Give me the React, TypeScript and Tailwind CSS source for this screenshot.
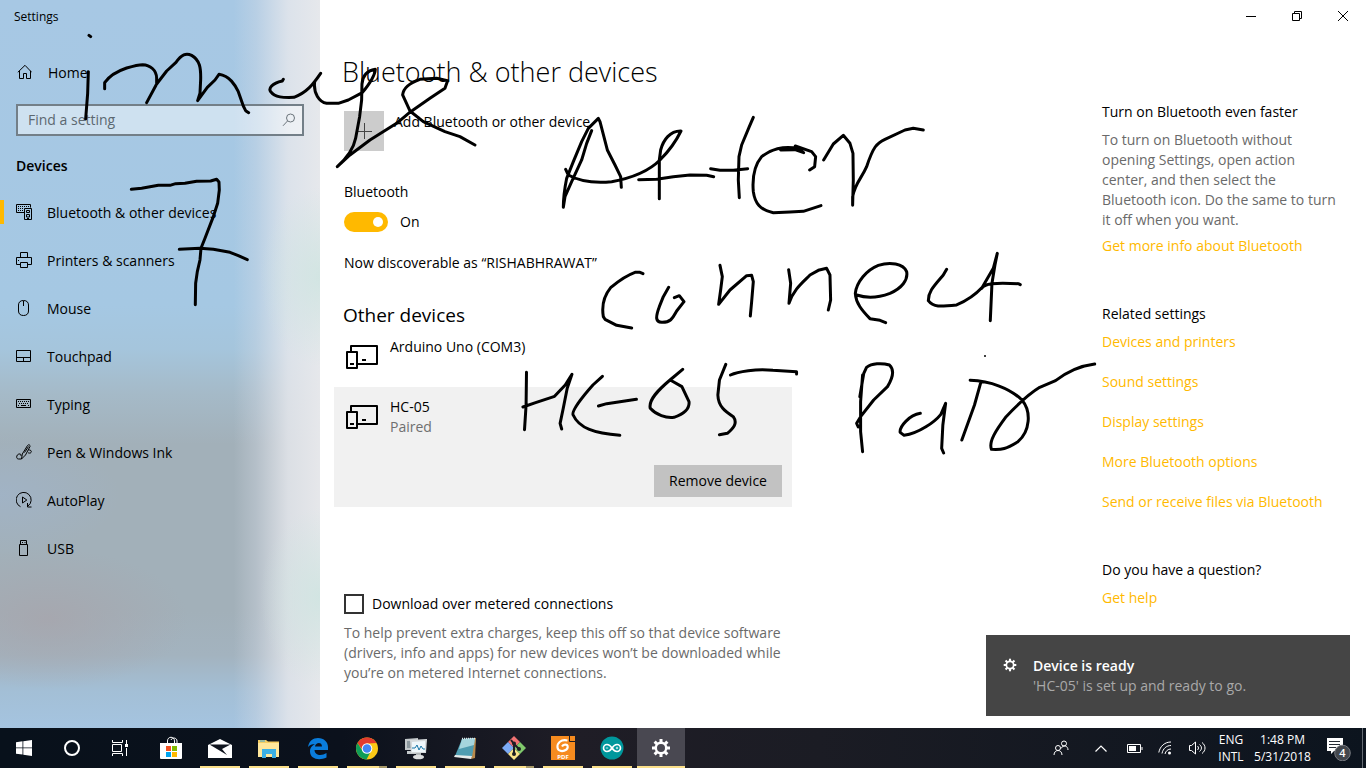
import React from 'react';

type IconProps = { children: React.ReactNode; className?: string };

function Glyph({ children, className = 'size-4' }: IconProps) {
  return (
    <svg viewBox="0 0 16 16" className={`${className} shrink-0`} fill="none" stroke="currentColor" strokeWidth="1" aria-hidden="true">
      {children}
    </svg>
  );
}

const navItems: { label: string; icon: React.ReactNode; active?: boolean }[] = [
  {
    label: 'Bluetooth & other devices',
    active: true,
    icon: (
      <>
        <path d="M8 8.500H.5v-8h14v3" />
        <path d="M2 2.500h11M2 4.500h6M2 6.500h6" strokeDasharray="1 1" />
        <path d="M8.500 4.500h7v11h-7z" />
        <path d="M10.500 6.500h3v2h-3zM10.500 10.500h3v2.500h-3zM11 14.500h2" />
      </>
    ),
  },
  {
    label: 'Printers & scanners',
    icon: (
      <>
        <path d="M4.500 5.500v-5h7v5M4.500 12.500h-4v-7h15v7h-4" />
        <path d="M4.500 10.500h7v5h-7zM2.500 8v1" />
      </>
    ),
  },
  { label: 'Mouse', icon: <path d="M7.500.5C4 .5 2.500 2.500 2.500 5v6c0 3 2 4.500 5 4.500s5-1.500 5-4.500V5c0-2.500-1.500-4.500-5-4.500zM7.500 1v5" /> },
  { label: 'Touchpad', icon: <path d="M.5 2.500h14v11H.5zM.5 9.500h14M7.500 9.500v4" /> },
  {
    label: 'Typing',
    icon: (
      <>
        <path d="M.5 3.500h14v8H.5z" />
        <path d="M2 5.500h11M3 7.500h10" strokeDasharray="1 1" />
        <path d="M2 9.500h1M5 9.500h5M12 9.500h1" />
      </>
    ),
  },
  {
    label: 'Pen & Windows Ink',
    icon: (
      <>
        <path d="M5.500 15l.8-5L11.500 1.500c1-1.500 3-.5 2.500 1L9.500 11 5.500 15M8.500 8.500l4-6" />
        <path d="M5.500 15H2.500c-2.500 0-2.500-4 .3-5 2-.5 2.700 1 2 2M12.500 6c2-.5 3.500 1.200 2.500 2.500-.7 1-2 .5-3 .3" />
      </>
    ),
  },
  {
    label: 'AutoPlay',
    icon: (
      <>
        <path d="M4.500 14.700A7.500 7.500 0 1 1 12 14" />
        <path d="M6.500 5v6l4.300-3zM11.500 11v4h4" />
      </>
    ),
  },
  { label: 'USB', icon: <path d="M3.500 4.500h8v11h-8zM4.500 4.500v-4h6v4M6 2.500h1M8.500 2.500h1" /> },
];

function DeviceIcon() {
  return (
    <svg viewBox="0 0 32 24" className="mt-2 h-6 w-8 shrink-0" fill="none" stroke="black" strokeWidth="2" strokeLinejoin="round" aria-hidden="true">
      <path d="M5 6V1h26v18H12M1 7h10v16H1zM4 19h4M16 15h4" />
    </svg>
  );
}

const relatedLinks = [
  'Devices and printers',
  'Sound settings',
  'Display settings',
  'More Bluetooth options',
  'Send or receive files via Bluetooth',
];

function Link({ children }: { children: string }) {
  return (
    <a href="#" className="text-[#ffb900] hover:text-[#c78f00]">
      {children}
    </a>
  );
}

function Sidebar() {
  return (
    <aside className="w-80 shrink-0 bg-[radial-gradient(ellipse_60px_90px_at_100%_38%,rgba(205,228,224,0.8),transparent),radial-gradient(ellipse_60px_90px_at_100%_82%,rgba(205,228,224,0.8),transparent),linear-gradient(to_right,transparent_73%,rgba(215,220,230,0.35)_80%,rgba(229,231,236,0.85)_90%,rgba(232,233,236,0.97)_100%),radial-gradient(ellipse_140px_70px_at_15%_85%,rgba(167,165,172,0.8),transparent),radial-gradient(ellipse_120px_60px_at_0%_68%,rgba(160,180,202,0.7),transparent),linear-gradient(to_bottom,#a7c8e4_0%,#a5c8e3_42%,#a5c5dc_48%,#a5bac8_54%,#a2b0b9_61%,#a2b0b9_84%,#a3b3bf_90%,#a3bfd6_95%,#a5c4e0_100%)]">
      <div className="flex h-8 items-center px-3.5 pt-0.5 text-[12px]">Settings</div>
      <a href="#" className="mt-4 flex h-12 items-center gap-4 px-4">
        <Glyph>
          <path d="M1.800 8.300L9 1.300l6.700 7M3.500 6.800v7.700h4V9.500h3v5h4V6.800" />
        </Glyph>
        <span className="pt-0.5">Home</span>
      </a>
      <div className="mx-4 mt-2 flex h-8 items-center border-2 border-[#737f88] bg-white/45 pr-1.5 pl-2.5">
        <input aria-label="Find a setting" placeholder="Find a setting" className="min-w-0 flex-1 bg-transparent outline-none placeholder:text-[#5c6870]" />
        <svg viewBox="0 0 14 14" className="size-3.5 text-[#6b747b]" fill="none" stroke="currentColor" aria-hidden="true">
          <circle cx="8.500" cy="5" r="4" />
          <path d="M5.500 8L1 12.800" />
        </svg>
      </div>
      <h2 className="mt-2 flex h-11 items-center px-4 font-semibold">Devices</h2>
      <nav>
        {navItems.map((item) => (
          <a key={item.label} href="#" className="flex h-12 items-center">
            <span className={item.active ? 'h-6 w-1 bg-[#ffb900]' : 'h-6 w-1'} />
            <span className="ml-3 flex items-center gap-[15px]">
              <Glyph>{item.icon}</Glyph>
              <span className="pt-0.5">{item.label}</span>
            </span>
          </a>
        ))}
      </nav>
    </aside>
  );
}

function DevicesPanel() {
  return (
    <section className="w-[448px] shrink-0">
      <h1 className="mt-5 -ml-0.5 text-[27px] leading-10 font-light">Bluetooth &amp; other devices</h1>
      <button className="mt-[19px] flex items-start gap-2.5 text-left">
        <span className="flex size-10 items-center justify-center bg-[#ccc]">
          <svg viewBox="0 0 16 16" className="size-4" stroke="#444" aria-hidden="true">
            <path d="M8.500 0v16M0 8.500h16" />
          </svg>
        </span>
        <span className="pt-px">Add Bluetooth or other device</span>
      </button>
      <label htmlFor="bt" className="mt-[31px] block">
        Bluetooth
      </label>
      <div className="mt-[9px] flex items-center gap-3">
        <input
          id="bt"
          type="checkbox"
          role="switch"
          defaultChecked
          className="flex h-5 w-11 appearance-none items-center rounded-full bg-[#999] px-[5px] before:size-2.5 before:rounded-full before:bg-white checked:justify-end checked:bg-[#ffb900]"
        />
        <span className="pt-px">On</span>
      </div>
      <p className="mt-[21px]">Now discoverable as “RISHABHRAWAT”</p>
      <h2 className="mt-7 -ml-px text-[19px] leading-7">Other devices</h2>
      <ul className="-ml-2.5">
        <li className="flex h-[58px] gap-3 px-3 pt-2">
          <DeviceIcon />
          <span>Arduino Uno (COM3)</span>
        </li>
        <li className="bg-[#f1f1f1] p-2.5">
          <div className="flex gap-3 pl-0.5">
            <DeviceIcon />
            <div>
              <p>HC-05</p>
              <p className="text-[#6f6f6f]">Paired</p>
            </div>
          </div>
          <button className="mt-7 ml-auto block h-8 w-32 bg-[#c2c2c2]">Remove device</button>
        </li>
      </ul>
      <label className="mt-[87px] flex items-center gap-2">
        <input type="checkbox" className="size-5 appearance-none border-2 border-[#333] bg-white checked:bg-[#ffb900]" />
        Download over metered connections
      </label>
      <p className="mt-[9px] text-[#6a6a6a]">
        To help prevent extra charges, keep this off so that device software (drivers, info and apps) for new devices won’t be downloaded while you’re on metered Internet connections.
      </p>
    </section>
  );
}

function HelpPanel() {
  return (
    <aside className="w-[264px] shrink-0 pt-[70px] pr-6">
      <h3>Turn on Bluetooth even faster</h3>
      <p className="mt-2 mb-1.5 text-[#6a6a6a]">
        To turn on Bluetooth without opening Settings, open action center, and then select the Bluetooth icon. Do the same to turn it off when you want.
      </p>
      <Link>Get more info about Bluetooth</Link>
      <h3 className="mt-12">Related settings</h3>
      <ul className="mt-2 flex flex-col gap-5 whitespace-nowrap">
        {relatedLinks.map((t) => (
          <li key={t}>
            <Link>{t}</Link>
          </li>
        ))}
      </ul>
      <h3 className="mt-12 mb-2">Do you have a question?</h3>
      <Link>Get help</Link>
    </aside>
  );
}

function WindowButtons() {
  const shapes = [
    { name: 'Minimize', d: 'M0 5.500h10' },
    { name: 'Restore', d: 'M.5 2.500h7v7h-7zM2.500 2.500v-2h7v7h-2' },
    { name: 'Close', d: 'M0 0l10 10M10 0L0 10' },
  ];
  return (
    <div className="flex h-8 justify-end">
      {shapes.map((s) => (
        <button key={s.name} aria-label={s.name} className="flex w-[46px] items-center justify-center">
          <svg viewBox="0 0 10 10" className="size-2.5" fill="none" stroke="black">
            <path d={s.d} />
          </svg>
        </button>
      ))}
    </div>
  );
}

const inkGroups = [
  {
    transform: 'scale(.3333)',
    d: 'M267 106l5 4 M265 215L263 280L257 357 M314 266L314 248C330 225 350 214 380 204C400 198 415 194 428 194C450 195 470 210 470 235L470 252 M440 308L470 252L500 213L528 187C545 163 558 158 575 166C600 180 603 205 602 240L600 280L593 302L622 262L645 240L657 223C690 228 705 255 715 275L730 318L737 332L746 338 M850 238L847 243C815 250 805 265 812 275C825 293 850 293 882 292C920 278 938 255 962 220 M944 246C940 280 958 306 980 310L1015 310L1045 300L1087 278C1110 250 1125 225 1126 208C1100 212 1088 230 1086 252L1085 300L1079 350L1067 415C1060 450 1040 475 1012 500L1050 465L1110 420L1190 370L1232 335L1290 295L1335 265L1343 242L1310 235L1260 238C1225 250 1210 265 1208 285L1230 333L1270 365L1335 395L1380 410L1425 435 M394 568L425 565L475 556L510 556L527 551L555 550L590 544L632 543L650 538L657 546L658 570L653 610L640 650L615 715L603 745L600 780L592 815L587 850L586 914 M538 748L600 745L640 748L690 757L715 767L742 779',
  },
  {
    transform: 'translate(520 100) scale(.3333)',
    d: 'M215 92L200 130L185 180L155 245L135 290L130 322C130 290 135 260 140 235L160 185L185 125L205 85L235 55L240 65L262 150L285 195L302 230L304 262 M137 208L145 225C180 245 220 250 275 245C320 237 380 220 420 180C450 150 470 120 483 93C450 92 430 120 422 150L418 180L418 296 M356 239L410 238L460 230L510 225L560 226L581 230 M700 52L688 80L665 135L657 170L655 240L658 293 M572 206L600 211L640 211L683 206 M782 150L825 149L851 158L835 146C790 135 750 150 725 170C700 200 697 240 700 275C705 310 720 330 760 338L810 336L850 334L903 317 M826 138L875 155L887 170L884 200L869 210 M911 180L940 132L970 106L990 130L999 160L1000 240L998 316L998 290C1005 250 1025 235 1040 200C1060 140 1070 130 1095 118L1155 90L1180 85L1210 90',
  },
  {
    transform: 'translate(580 240) scale(.3333)',
    d: 'M189 101L180 97L165 97C130 110 110 128 92 143C70 170 65 200 70 230L75 238L110 256L155 264 M266 142L250 170L238 200C225 235 228 245 245 247C275 248 280 230 290 213L312 185L298 167L283 173 M420 76L427 110L422 150L416 193L450 150L500 107L515 106L520 125L515 185L511 228 M626 89L632 130L627 190C640 150 665 130 690 105L715 91L740 85L750 105L752 180L745 210 M830 165C860 175 890 175 930 160C965 145 985 120 980 95C970 70 930 65 895 76C860 90 830 125 826 160C828 190 845 210 870 236L900 241L917 248 M1100 88L1090 105C1060 140 1045 155 1045 182C1060 202 1080 200 1130 195C1170 178 1195 155 1207 142L1240 85L1252 40L1245 75L1236 130L1231 242 M1205 145C1215 130 1240 128 1315 131L1321 134',
  },
  {
    transform: 'translate(500 345) scale(.3954 .3333)',
    d: 'M67 82L66 180L62 254 M58 186L90 173L138 154L165 120L182 88L170 130L160 190L152 235L156 252 M259 94L235 120C205 160 180 200 185 210C200 250 240 265 303 271 M249 183L270 176L345 163 M462 73L430 105C400 135 375 165 380 190C395 210 420 220 440 217C470 205 480 190 478 170L460 125L435 108 M571 58L555 105L551 150C552 185 570 200 590 215C602 235 590 250 575 265L555 269 M583 90C600 80 650 70 690 76L750 80L750 87 M910 155L920 85L927 67C940 55 965 53 985 60C998 75 993 100 980 125L945 165L912 215L902 235L906 246 M917 90L912 170L912 260L917 320 M1063 205C1035 210 1010 245 1012 262L1022 271C1060 265 1100 230 1115 208L1127 175L1120 240L1117 310L1122 324 M1216 112L1200 180L1168 285 M1189 106C1240 108 1290 130 1320 165C1345 200 1340 260 1310 290C1280 312 1270 315 1243 313C1235 290 1255 255 1280 215C1320 165 1340 145 1365 127L1405 107C1440 75 1470 62 1504 57',
  },
];

function Ink() {
  return (
    <svg viewBox="0 0 1366 728" className="pointer-events-none absolute top-0 left-0 h-[728px] w-[1366px]" fill="none" stroke="black" strokeWidth="3" strokeLinecap="round" strokeLinejoin="round" aria-hidden="true">
      {inkGroups.map((g) => (
        <path key={g.transform} transform={g.transform} d={g.d} vectorEffect="non-scaling-stroke" />
      ))}
      <circle cx="985" cy="356" r="1" fill="black" stroke="none" />
    </svg>
  );
}

const gearTeeth = [0, 45, 90, 135, 180, 225, 270, 315];

function Gear({ className }: { className: string }) {
  return (
    <svg viewBox="0 0 20 20" className={className} fill="none" stroke="white" aria-hidden="true">
      <circle cx="10" cy="10" r="5.200" strokeWidth="2.400" />
      {gearTeeth.map((angle) => (
        <path key={angle} d="M10 1v3.500" strokeWidth="3" transform={`rotate(${angle} 10 10)`} />
      ))}
    </svg>
  );
}

function Toast() {
  return (
    <div role="status" className="absolute right-4 bottom-3 flex h-[81px] w-[364px] gap-4 bg-[#454545] px-[17px] pt-[21px]">
      <Gear className="mt-0.5 size-3.5" />
      <div>
        <p className="font-semibold text-white">Device is ready</p>
        <p className="text-[#a9a9a9]">'HC-05' is set up and ready to go.</p>
      </div>
    </div>
  );
}

const apps: { name: string; open: boolean; stacked?: boolean; active?: boolean; art: React.ReactNode }[] = [
  {
    name: 'Microsoft Store',
    open: false,
    art: (
      <>
        <path d="M8.500 8V5c0-5 7-5 7 0v3M12 4c1-3 6-2.500 6 1v3" fill="none" stroke="white" strokeWidth="1" />
        <path d="M1 7h22v15q0 1-1 1H2q-1 0-1-1z" fill="white" />
        <path d="M7 10h5v5H7z" fill="#f25022" />
        <path d="M13 10h5v5h-5z" fill="#7fba00" />
        <path d="M7 16h5v5H7z" fill="#00a4ef" />
        <path d="M13 16h5v5h-5z" fill="#ffb900" />
      </>
    ),
  },
  {
    name: 'Mail',
    open: true,
    art: (
      <>
        <path d="M0 9L12 3l12 6v13H0z" fill="white" />
        <path d="M1.500 8.500h21L14 13l5 6z" fill="#10151f" />
      </>
    ),
  },
  {
    name: 'File Explorer',
    open: true,
    art: (
      <>
        <path d="M1 4h8l2 1.500h11V21H1z" fill="#f5cd62" />
        <path d="M1 7h21v14H1z" fill="#ffe79b" />
        <path d="M3 5h5" stroke="#38a7df" />
        <path d="M5 13h14v9h-4v-4H9v4H5z" fill="#3bafe4" />
      </>
    ),
  },
  {
    name: 'Edge',
    open: true,
    art: (
      <path
        d="M2 11C3 5 7 2 12 2c6 0 10 4 10 9v3H8.500c.3 6 7.500 6 12 3v4.500C13 25 4 23 4 15.500c0-4 2.500-6 5-7.500-3 .2-5.500 1-7 3zM9 10.500h7c0-5-6.500-4.500-7 0z"
        fill="#0a7ddc"
        fillRule="evenodd"
      />
    ),
  },
  {
    name: 'Chrome',
    open: true,
    stacked: true,
    art: (
      <>
        <circle cx="12" cy="12.500" r="11" fill="#fbc916" />
        <path d="M2.500 7A11 11 0 0 1 21.500 7L12 7.500 9 16z" fill="#e33b2e" />
        <path d="M2.500 7A11 11 0 0 0 11.500 23.500L16 15 12 17 7 14z" fill="#0f9d58" />
        <circle cx="12" cy="12.500" r="5.300" fill="white" />
        <circle cx="12" cy="12.500" r="4.300" fill="#4285f4" />
      </>
    ),
  },
  {
    name: 'System Monitor',
    open: true,
    art: (
      <>
        <path d="M1 3l13-1v12H1zM3 15h9l2 3H3z" fill="#c3c8ca" />
        <path d="M3 5h8v7H3z" fill="#8d999f" />
        <path d="M6 4l17-1-1 14H7z" fill="#d6dadc" />
        <path d="M8 6l13-1v11H8z" fill="#eff7fb" />
        <path d="M8 12h3l2-3 2 5 2-4 2 3h2" fill="none" stroke="#1976a8" />
        <path d="M12 17h5v3h-5z" fill="#aeb3b5" />
        <ellipse cx="14.500" cy="21" rx="5.500" ry="2.300" fill="#dcdedf" />
      </>
    ),
  },
  {
    name: 'Notepad',
    open: true,
    art: (
      <>
        <path d="M20 2h3l-1 20-4 1z" fill="#b88a4c" />
        <path d="M9 3l13-1-3 19-17-1z" fill="#4f9db1" />
        <path d="M9 3l13-1-1 7L6 13z" fill="#a5d5dd" />
        <path d="M2 19l17 1-1 3L1 21z" fill="#e7eceb" />
        <path d="M9 2.500h13" stroke="#dce5e7" strokeWidth="1.500" strokeDasharray="1 1" />
      </>
    ),
  },
  {
    name: 'Git Bash',
    open: true,
    stacked: true,
    art: (
      <>
        <path d="M12 0l6 6-6 6-6-6z" fill="#f27373" />
        <path d="M18 6l6 6-6 6-6-6z" fill="#80c96c" />
        <path d="M6 6l6 6-6 6-6-6z" fill="#7caaf5" />
        <path d="M12 12l6 6-6 6-6-6z" fill="#fae388" />
        <path d="M9 4l3 4v10M12 8l5 5" fill="none" stroke="#1d1e25" strokeWidth="2" />
        <circle cx="12" cy="7.500" r="2" fill="#1d1e25" />
        <circle cx="17" cy="13" r="2" fill="#1d1e25" />
        <circle cx="12" cy="18" r="2" fill="#1d1e25" />
      </>
    ),
  },
  {
    name: 'Foxit Reader',
    open: true,
    art: (
      <>
        <path d="M0 0h18l6 6v18H0z" fill="#f68b1f" />
        <path d="M19 0h5v5h-5z" fill="#f68b1f" />
        <path d="M18.500 0v5.500H24" fill="none" stroke="#1d1e25" />
        <path d="M16.500 4.500C10 3 6 7 6.500 11.500c.5 4 5.500 4.500 9 2 1.500-1.500 1.500-3.500.5-4.500-1.500-1-4 0-5 1.500" fill="none" stroke="white" strokeWidth="2.200" />
        <text x="12" y="22.500" fontSize="6" fontWeight="700" textAnchor="middle" fill="white" fontFamily="Open Sans, sans-serif">
          PDF
        </text>
      </>
    ),
  },
  {
    name: 'Arduino',
    open: true,
    art: (
      <>
        <circle cx="12" cy="12" r="11.500" fill="#00979c" />
        <path d="M12 12c-2-3-3.500-3.500-5-3.500a3.500 3.500 0 0 0 0 7c1.500 0 3-.5 5-3.500s3.500-3.500 5-3.500a3.500 3.500 0 0 1 0 7c-1.500 0-3-.5-5-3.500z" fill="none" stroke="white" strokeWidth="1.600" />
        <path d="M5.800 12h2.400M15.800 12h2.400M17 10.800v2.400" stroke="white" strokeWidth=".8" />
      </>
    ),
  },
  { name: 'Settings', open: true, active: true, art: null },
];

function Taskbar() {
  return (
    <footer className="flex h-10 shrink-0 bg-[linear-gradient(to_right,#08111b,#0b111c_25%,#1f1d26_42%,#1b1c24_60%,#0c141e)] text-[12px] text-white">
      <button aria-label="Start" className="flex w-12 items-center justify-center">
        <svg viewBox="0 0 16 16" className="size-4" fill="white">
          <path d="M0 2.200L6.500 1.300v6.200H0zM7.300 1.200L16 0v7.500H7.300zM0 8.300h6.500v6.300L0 13.700zM7.300 8.300H16V16l-8.700-1.200z" />
        </svg>
      </button>
      <button aria-label="Cortana" className="flex w-12 items-center justify-center">
        <span className="size-4 rounded-full border-2 border-white" />
      </button>
      <button aria-label="Task View" className="mr-[3px] flex w-12 items-center justify-center">
        <svg viewBox="0 0 16 16" className="size-4" fill="none" stroke="white">
          <path d="M.5 0v2.500h10V0M.5 4.500h9v7h-9zM.5 16v-2.500h10V16M14.500 0v4M14.500 8v8" />
          <path d="M13 4h3v3h-3z" fill="white" stroke="none" />
        </svg>
      </button>
      <div className="flex gap-px">
        {apps.map((a) => (
          <button key={a.name} aria-label={a.name} className={a.active ? 'flex w-12 flex-col items-center bg-[#494851]' : 'flex w-12 flex-col items-center'}>
            <span className="flex h-[38px] items-center justify-center pt-0.5">
              {a.art ? (
                <svg viewBox="0 0 24 24" className="size-6">
                  {a.art}
                </svg>
              ) : (
                <Gear className="size-5" />
              )}
            </span>
            {a.open && (
              <span className={a.active ? 'flex h-0.5 w-12 justify-end bg-[#fbe08a]' : 'flex h-0.5 w-10 justify-end bg-[#fbe08a]'}>
                {a.stacked && <span className="w-2 bg-[#a89a6a]" />}
              </span>
            )}
          </button>
        ))}
      </div>
      <div className="ml-auto flex items-center">
        <button aria-label="People" className="flex w-10 justify-center">
          <Glyph>
            <circle cx="11" cy="3.500" r="2.500" />
            <circle cx="5" cy="8" r="2.500" />
            <path d="M1 15c0-6 8-6 8 0M8 8.500c2-4 7-3 7 1.500" />
          </Glyph>
        </button>
        <button aria-label="Show hidden icons" className="flex w-10 justify-center">
          <svg viewBox="0 0 12 7" className="h-[7px] w-3" fill="none" stroke="white" strokeWidth="1.200">
            <path d="M.5 6.500L6 1l5.500 5.500" />
          </svg>
        </button>
        <button aria-label="Battery" className="flex w-7 justify-center">
          <svg viewBox="0 0 16 9" className="h-[9px] w-4" fill="none" stroke="white">
            <path d="M.5.5h13v8H.5zM15 3v3" />
            <path d="M2 2h7v5H2z" fill="white" stroke="none" />
          </svg>
        </button>
        <button aria-label="Network" className="flex w-8 justify-center">
          <svg viewBox="0 0 14 14" className="size-3.5" fill="none" stroke="white">
            <path d="M.8 11.500C2 5 7 1 13 1M4 12.500C5 7.500 8.500 4.500 13 4.500M7 13c.6-3 3-5 6-5" />
            <circle cx="11.500" cy="12" r="1.500" fill="white" stroke="none" />
          </svg>
        </button>
        <button aria-label="Volume" className="flex w-8 justify-center">
          <svg viewBox="0 0 17 14" className="h-3.5 w-[17px]" fill="none" stroke="white">
            <path d="M.5 4.500h2l4-3.500v12l-4-3.500h-2zM8.500 5c1.300 1.200 1.300 2.800 0 4M10.500 3.500c2.600 2 2.600 5 0 7M13 1.500c4 3 4 8 0 11" />
          </svg>
        </button>
        <button className="w-9 text-center leading-[17px]">
          ENG
          <br />
          INTL
        </button>
        <button className="w-[67px] text-center leading-[17px] whitespace-nowrap">
          1:48 PM
          <br />
          5/31/2018
        </button>
        <button aria-label="4 new notifications" className="flex w-[46px] justify-center">
          <svg viewBox="0 0 26 26" className="size-[26px]">
            <path d="M1 3h16v13h-9l-3 3v-3H1z" fill="white" />
            <path d="M3 6.500h11M3 9.500h11M3 12.500h7" stroke="#252b34" />
            <circle cx="16.500" cy="18" r="7.800" fill="#43474d" stroke="#777a80" />
            <text x="16.500" y="22" fontSize="11" fontWeight="600" textAnchor="middle" fill="white" fontFamily="Open Sans, sans-serif">
              4
            </text>
          </svg>
        </button>
        <span className="h-10 w-1 border-l border-[#646a72]" />
      </div>
    </footer>
  );
}

export default function App() {
  return (
    <div className="flex min-h-screen flex-col bg-white font-['Open_Sans','Noto_Sans',sans-serif] text-[14px] leading-5 text-black">
      <div className="relative flex flex-1">
        <Sidebar />
        <main className="min-w-0 flex-1">
          <WindowButtons />
          <div className="flex justify-between pl-6">
            <DevicesPanel />
            <HelpPanel />
          </div>
        </main>
        <Toast />
        <Ink />
      </div>
      <Taskbar />
    </div>
  );
}
